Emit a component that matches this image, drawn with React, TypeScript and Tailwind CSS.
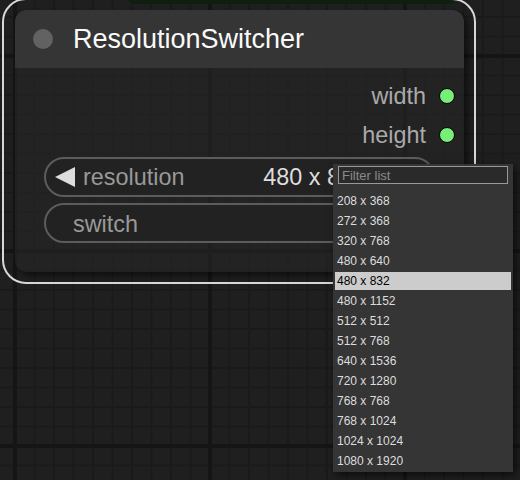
import React from "react";

const sizes = [
  "208 x 368",
  "272 x 368",
  "320 x 768",
  "480 x 640",
  "480 x 832",
  "480 x 1152",
  "512 x 512",
  "512 x 768",
  "640 x 1536",
  "720 x 1280",
  "768 x 768",
  "768 x 1024",
  "1024 x 1024",
  "1080 x 1920",
];

function Grid() {
  const thin: number[] = [1, 2, 3, 4, 5, 6, 7, 8, 9];
  return (
    <svg className="absolute inset-0" width="520" height="480">
      <defs>
        <pattern
          id="grid"
          width="195"
          height="195"
          patternUnits="userSpaceOnUse"
          patternTransform="translate(15 446)"
        >
          <rect x="0" y="0" width="195" height="195" fill="#1f1f1f" />
          {thin.map((k) => (
            <rect key={"v" + k} x={k * 19.5 - 1} y="0" width="2" height="195" fill="#1a1a1a" />
          ))}
          {thin.map((k) => (
            <rect key={"h" + k} x="0" y={k * 19.5 - 1} width="195" height="2" fill="#1a1a1a" />
          ))}
          <rect x="0" y="0" width="2" height="195" fill="#151515" />
          <rect x="193" y="0" width="2" height="195" fill="#151515" />
          <rect x="0" y="0" width="195" height="2" fill="#151515" />
          <rect x="0" y="193" width="195" height="2" fill="#151515" />
        </pattern>
      </defs>
      <rect width="520" height="480" fill="url(#grid)" />
    </svg>
  );
}

export default function App() {
  return (
    <div className="relative w-[520px] h-[480px] overflow-hidden bg-[#1f1f1f] font-['Liberation_Sans',Arial,sans-serif]">
      <Grid />

      {/* another node peeking from above */}
      <div className="absolute left-[127px] top-[-20px] w-[330px] h-[24px] rounded-b-[8px] bg-[#0f1e0f]" />

      {/* selection outline */}
      <div className="absolute left-[2px] top-[-2px] w-[474px] h-[286px] rounded-[24px] border-2 border-[#d8d8d8]" />

      {/* node */}
      <div className="absolute left-[15px] top-[10px] w-[449px] h-[262px] flex flex-col rounded-[12px] shadow-[4px_4px_6px_rgba(0,0,0,0.5)]">
        <div className="h-[58px] shrink-0 flex items-center rounded-t-[12px] bg-[#353535]">
          <div className="ml-[18px] w-5 h-5 rounded-full bg-[#626262]" />
          <span className="ml-5 text-[27px] leading-none text-[#fafafa]">ResolutionSwitcher</span>
        </div>
        <div className="flex-1 flex flex-col rounded-b-[12px] bg-[rgba(38,38,38,0.6)] pt-[8.5px]">
          <div className="h-[39px] flex items-center justify-end pr-[9px] gap-[13px]">
            <span className="pt-[2px] text-[23.4px] leading-none text-[#aaaaaa]">width</span>
            <div className="w-4 h-4 rounded-full bg-[#77ee77] border-[1.5px] border-black" />
          </div>
          <div className="h-[39px] flex items-center justify-end pr-[9px] gap-[13px]">
            <span className="pt-[2px] text-[23.4px] leading-none text-[#aaaaaa]">height</span>
            <div className="w-4 h-4 rounded-full bg-[#77ee77] border-[1.5px] border-black" />
          </div>

          <div className="mt-[2.5px] mx-[29px] h-[40px] flex items-center rounded-full border-2 border-[#5c5c5c] bg-[#222222] text-[23.4px] leading-none">
            <svg className="ml-[9px] shrink-0" width="20" height="20" viewBox="0 0 20 20">
              <polygon points="0,10 20,0 20,20" fill="#dddddd" />
            </svg>
            <span className="ml-[8px] pt-[2px] text-[#999999]">resolution</span>
            <span className="flex-1" />
            <span className="pt-[2px] text-[#dddddd]">480 x 832</span>
            <svg className="ml-[39px] mr-[8px] shrink-0" width="20" height="20" viewBox="0 0 20 20">
              <polygon points="20,10 0,0 0,20" fill="#dddddd" />
            </svg>
          </div>

          <div className="mt-[6px] mx-[29px] h-[40px] flex items-center rounded-full border-2 border-[#5c5c5c] bg-[#222222] text-[23.4px] leading-none">
            <span className="ml-[27px] pt-[3px] text-[#999999]">switch</span>
          </div>
        </div>
      </div>

      {/* dropdown menu */}
      <div className="absolute left-[333px] top-[164px] w-[180px] h-[308px] flex flex-col bg-[#353535] px-[2px] pt-[2px] pb-[1px] shadow-[3px_3px_8px_rgba(0,0,0,0.6)]">
        <input
          readOnly
          placeholder="Filter list"
          className="mx-[3px] h-[18px] shrink-0 border border-[#999999] bg-[#2a2a2a] px-[3px] text-[13px] leading-none text-[#dddddd] placeholder:text-[#8a8a8a] outline-none font-['Liberation_Sans',Arial,sans-serif]"
        />
        <div className="mt-[7px] flex flex-col">
          {sizes.map((s) => (
            <div
              key={s}
              className={
                s === "480 x 832"
                  ? "my-[1px] h-[18px] pl-[2px] text-[12px] leading-[18px] bg-[#cccccc] text-black"
                  : "my-[1px] h-[18px] pl-[2px] text-[12px] leading-[18px] text-[#dddddd]"
              }
            >
              {s}
            </div>
          ))}
        </div>
      </div>
    </div>
  );
}
